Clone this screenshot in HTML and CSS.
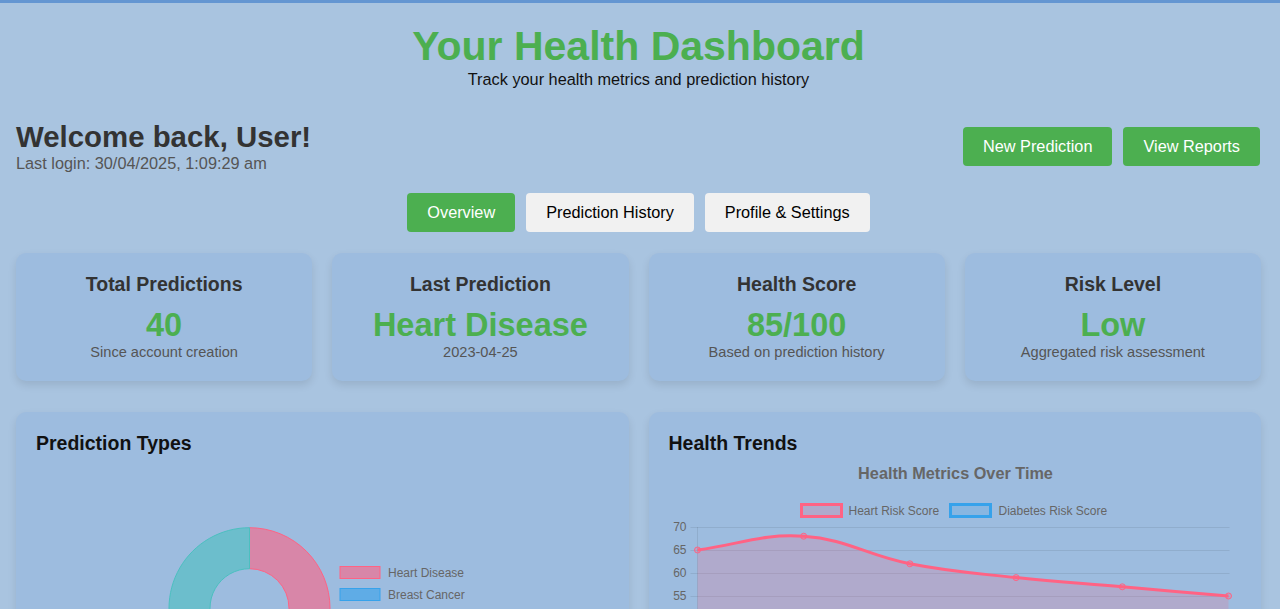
FILE: index.html
```html
<!DOCTYPE html>
<html lang="en">
<head>
<meta charset="utf-8">
<title>Your Health Dashboard</title>
<link rel="stylesheet" href="styles.css">
</head>
<body>
<div class="page">
  <header class="dash-header">
    <h1 class="dash-title">Your Health Dashboard</h1>
    <p class="dash-subtitle">Track your health metrics and prediction history</p>
  </header>

  <section class="welcome-row">
    <div class="welcome-text">
      <h2 class="welcome-title">Welcome back, User!</h2>
      <p class="last-login">Last login: 30/04/2025, 1:09:29 am</p>
    </div>
    <div class="actions">
      <button class="btn btn-green">New Prediction</button>
      <button class="btn btn-green">View Reports</button>
    </div>
  </section>

  <nav class="tabs">
    <button class="btn btn-green">Overview</button>
    <button class="btn btn-tab">Prediction History</button>
    <button class="btn btn-tab">Profile &amp; Settings</button>
  </nav>

  <section class="stats">
    <div class="stat-card">
      <h3 class="stat-title">Total Predictions</h3>
      <div class="stat-value">40</div>
      <div class="stat-sub">Since account creation</div>
    </div>
    <div class="stat-card">
      <h3 class="stat-title">Last Prediction</h3>
      <div class="stat-value">Heart Disease</div>
      <div class="stat-sub">2023-04-25</div>
    </div>
    <div class="stat-card">
      <h3 class="stat-title">Health Score</h3>
      <div class="stat-value">85/100</div>
      <div class="stat-sub">Based on prediction history</div>
    </div>
    <div class="stat-card">
      <h3 class="stat-title">Risk Level</h3>
      <div class="stat-value">Low</div>
      <div class="stat-sub">Aggregated risk assessment</div>
    </div>
  </section>

  <section class="charts">
    <div class="chart-card">
      <h3 class="chart-title">Prediction Types</h3>
      <svg class="chart-svg" width="572" height="240" viewBox="0 0 572 240">
        <path d="M213.5 73.7 A80.5 80.5 0 0 1 213.5 234.7 L213.5 193.7 A39.5 39.5 0 0 0 213.5 114.7 Z" fill="rgba(255,99,132,0.6)" stroke="rgba(255,99,132,1)" stroke-width="1"/>
        <path d="M213.5 234.7 A80.5 80.5 0 0 1 143.8 194.45 L179.3 173.95 A39.5 39.5 0 0 0 213.5 193.7 Z" fill="rgba(54,162,235,0.6)" stroke="rgba(54,162,235,1)" stroke-width="1"/>
        <path d="M143.8 194.45 A80.5 80.5 0 0 1 213.5 73.7 L213.5 114.7 A39.5 39.5 0 0 0 179.3 173.95 Z" fill="rgba(75,192,192,0.6)" stroke="rgba(75,192,192,1)" stroke-width="1"/>
        <rect x="304" y="112.5" width="40" height="12" fill="rgba(255,99,132,0.6)" stroke="rgba(255,99,132,1)" stroke-width="1"/>
        <text x="352" y="122.5" class="legend-text">Heart Disease</text>
        <rect x="304" y="134.5" width="40" height="12" fill="rgba(54,162,235,0.6)" stroke="rgba(54,162,235,1)" stroke-width="1"/>
        <text x="352" y="144.5" class="legend-text">Breast Cancer</text>
      </svg>
    </div>
    <div class="chart-card">
      <h3 class="chart-title">Health Trends</h3>
      <svg class="chart-svg" width="572" height="240" viewBox="0 0 572 240">
        <text x="286.5" y="25" class="line-title" text-anchor="middle">Health Metrics Over Time</text>
        <rect x="132.5" y="50.5" width="40" height="12" fill="rgba(255,99,132,0.2)" stroke="rgb(255,99,132)" stroke-width="3"/>
        <text x="179.5" y="60.5" class="legend-text">Heart Risk Score</text>
        <rect x="281.5" y="50.5" width="40" height="12" fill="rgba(54,162,235,0.2)" stroke="rgb(54,162,235)" stroke-width="3"/>
        <text x="329.5" y="60.5" class="legend-text">Diabetes Risk Score</text>
        <g stroke="rgba(0,0,0,0.08)" stroke-width="1">
          <line x1="21.5" y1="73.5" x2="560.5" y2="73.5"/>
          <line x1="21.5" y1="96.5" x2="560.5" y2="96.5"/>
          <line x1="21.5" y1="119.5" x2="560.5" y2="119.5"/>
          <line x1="21.5" y1="142.5" x2="560.5" y2="142.5"/>
          <line x1="21.5" y1="165.5" x2="560.5" y2="165.5"/>
          <line x1="28.5" y1="73" x2="28.5" y2="240"/>
        </g>
        <g class="axis-text" text-anchor="end">
          <text x="17.5" y="77">70</text>
          <text x="17.5" y="100">65</text>
          <text x="17.5" y="123">60</text>
          <text x="17.5" y="146">55</text>
        </g>
        <path d="M28.5 96 C71 90.5 92.2 79.4 134.7 82.2 C177.2 85 198.4 101.5 240.9 109.8 C283.4 118.1 304.6 119 347.1 123.6 C389.6 128.2 410.8 129.1 453.3 132.8 C495.8 136.5 517 138.3 559.5 142 L559.5 240 L28.5 240 Z" fill="rgba(255,99,132,0.2)"/>
        <path d="M28.5 96 C71 90.5 92.2 79.4 134.7 82.2 C177.2 85 198.4 101.5 240.9 109.8 C283.4 118.1 304.6 119 347.1 123.6 C389.6 128.2 410.8 129.1 453.3 132.8 C495.8 136.5 517 138.3 559.5 142" fill="none" stroke="rgb(255,99,132)" stroke-width="3"/>
        <g fill="rgba(255,99,132,0.2)" stroke="rgb(255,99,132)" stroke-width="1">
          <circle cx="28.5" cy="96" r="3"/>
          <circle cx="134.7" cy="82.2" r="3"/>
          <circle cx="240.9" cy="109.8" r="3"/>
          <circle cx="347.1" cy="123.6" r="3"/>
          <circle cx="453.3" cy="132.8" r="3"/>
          <circle cx="559.5" cy="142" r="3"/>
        </g>
      </svg>
    </div>
  </section>
</div>
</body>
</html>
```

FILE: styles.css
```css
html, body {
  margin: 0;
  padding: 0;
}

body {
  background: #a9c4e0;
  border-top: 3px solid #6496d2;
  font-family: "Liberation Sans", Arial, Helvetica, sans-serif;
  color: #111;
  overflow: hidden;
}

.page {
  margin-left: 16px;
  width: 1245px;
}

.dash-header {
  text-align: center;
  padding-top: 20px;
}

.dash-title {
  margin: 0;
  font-size: 41px;
  line-height: 47px;
  font-weight: bold;
  color: #4caf50;
}

.dash-subtitle {
  margin: 0;
  font-size: 16.3px;
  line-height: 19px;
  color: #111;
}

.welcome-row {
  margin-top: 31px;
  display: flex;
  justify-content: space-between;
  align-items: center;
}

.welcome-title {
  margin: 0;
  font-size: 29.4px;
  line-height: 34px;
  font-weight: bold;
  color: #333;
}

.last-login {
  margin: 0;
  font-size: 16.3px;
  line-height: 19px;
  color: #555;
}

.actions {
  display: flex;
  gap: 11px;
  margin-right: 1px;
}

.btn {
  border: none;
  border-radius: 4px;
  padding: 10px 20px;
  font-family: inherit;
  font-size: 16.3px;
  line-height: 19px;
  cursor: pointer;
}

.btn-green {
  background: #4caf50;
  color: #fff;
}

.btn-tab {
  background: #f1f1f1;
  color: #000;
}

.tabs {
  margin-top: 20px;
  display: flex;
  justify-content: center;
  gap: 11px;
}

.stats {
  margin-top: 21px;
  display: grid;
  grid-template-columns: repeat(4, 1fr);
  gap: 20px;
}

.stat-card {
  background: #9dbcdf;
  border-radius: 10px;
  padding: 20px;
  text-align: center;
  box-shadow: 0 4px 8px rgba(0, 0, 0, 0.1);
}

.stat-title {
  margin: 0 0 12px;
  font-size: 19.5px;
  line-height: 22px;
  font-weight: bold;
  color: #333;
}

.stat-value {
  font-size: 32.5px;
  line-height: 37px;
  font-weight: bold;
  color: #4caf50;
}

.stat-sub {
  font-size: 14.6px;
  line-height: 17px;
  color: #555;
}

.charts {
  margin-top: 31px;
  display: grid;
  grid-template-columns: 1fr 1fr;
  gap: 20px;
}

.chart-card {
  background: #9dbcdf;
  border-radius: 10px;
  padding: 20px;
  box-shadow: 0 4px 8px rgba(0, 0, 0, 0.1);
  height: 300px;
}

.chart-title {
  margin: 0;
  font-size: 19.5px;
  line-height: 22px;
  font-weight: bold;
  color: #111;
}

.chart-svg {
  display: block;
  overflow: visible;
}

.legend-text {
  font-family: "Liberation Sans", Arial, sans-serif;
  font-size: 12px;
  fill: #666;
}

.line-title {
  font-family: "Liberation Sans", Arial, sans-serif;
  font-size: 16.25px;
  font-weight: bold;
  fill: #666;
}

.axis-text {
  font-family: "Liberation Sans", Arial, sans-serif;
  font-size: 12px;
  fill: #666;
}
```
